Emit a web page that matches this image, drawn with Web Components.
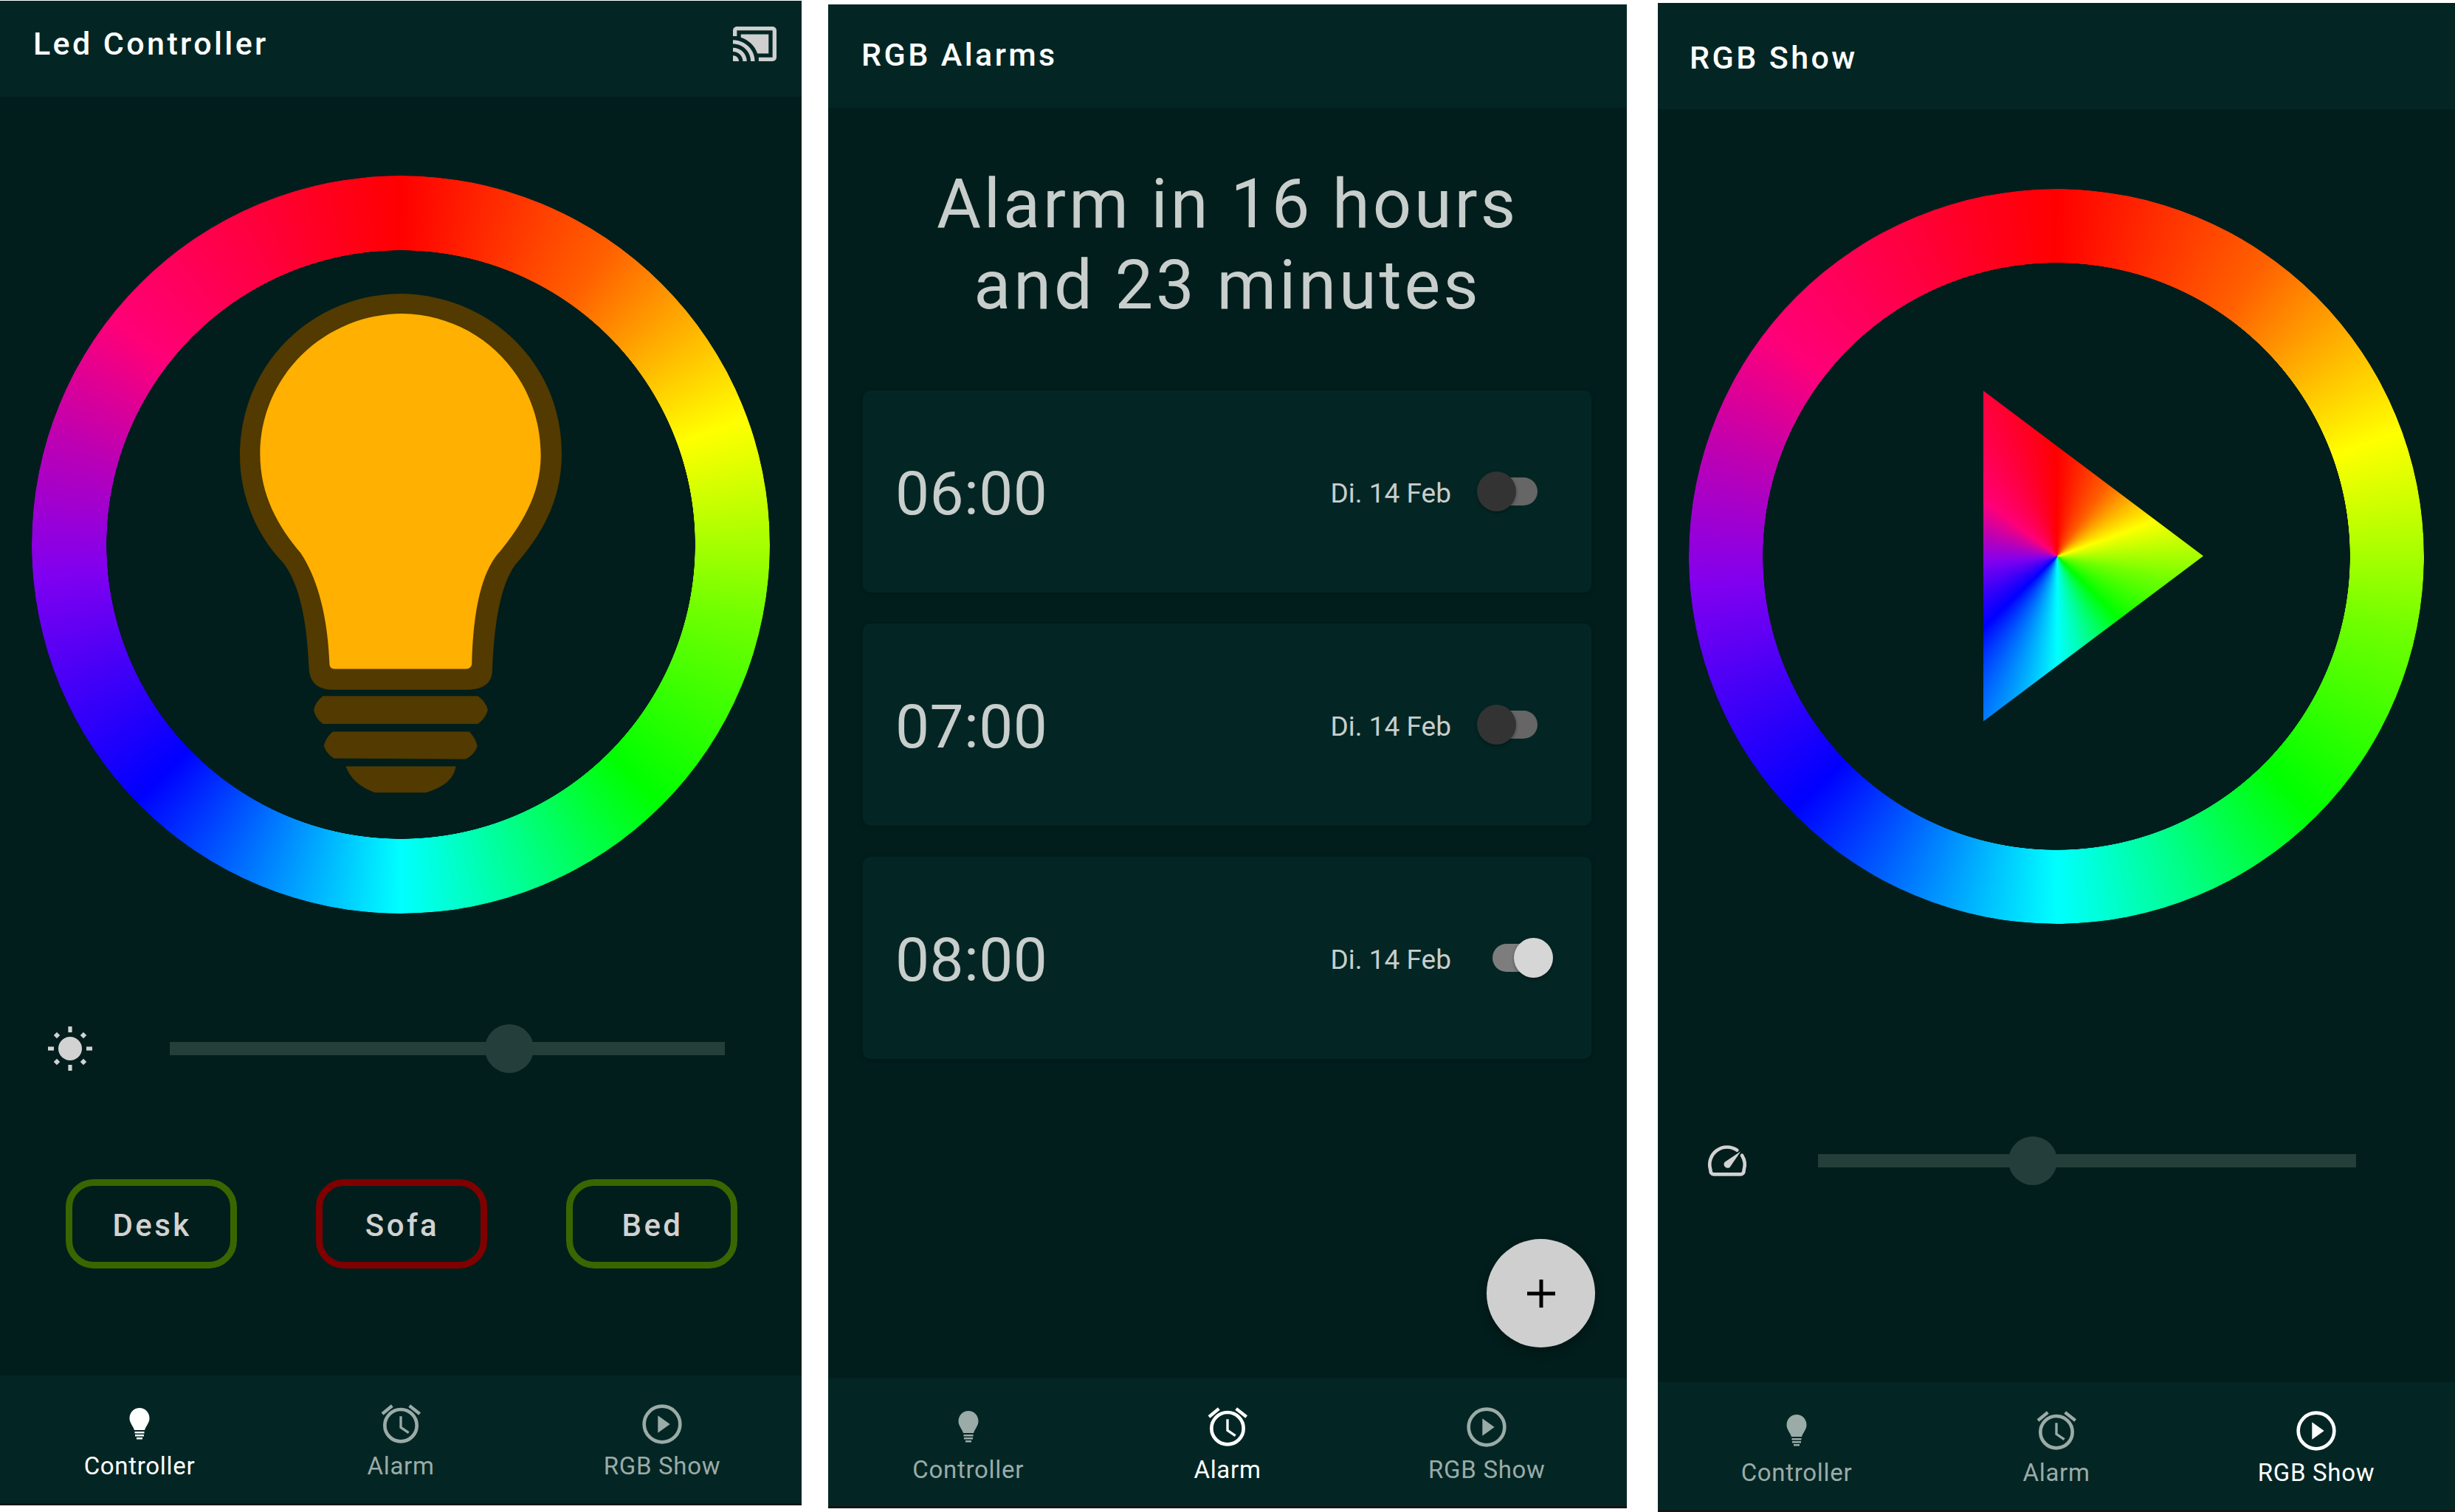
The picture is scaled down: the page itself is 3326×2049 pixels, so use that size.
<!DOCTYPE html>
<html>
<head>
<meta charset="utf-8">
<title>Led Controller</title>
<style>
    html, body { margin: 0; padding: 0; background: #fff; }
    body { display: flex; align-items: flex-start; width: 3326px; height: 2049px; overflow: hidden; font-family: Roboto, "Liberation Sans", sans-serif; }
</style>
</head>
<body>

<led-phone heading="Led Controller" style="--w:1086px;--h:2039px;--top:1px;--left:0px;--bar:130px;--bar-pad:14px;">
    <svg slot="action" width="59" height="47" viewBox="1 3 22 18" preserveAspectRatio="none" fill="#cfcfcf"><path d="M1 18v3h3c0-1.66-1.34-3-3-3zm0-4v2c2.76 0 5 2.24 5 5h2c0-3.87-3.13-7-7-7zm18-7H5v1.63c3.96 1.28 7.09 4.41 8.37 8.37H19V7zM1 10v2c4.97 0 9 4.03 9 9h2c0-6.08-4.93-11-11-11zm20-7H3c-1.1 0-2 .9-2 2v3h2V5h18v14h-7v2h7c1.1 0 2-.9 2-2V5c0-1.1-.9-2-2-2z"/></svg>
    <led-wheel style="--size:1000px;--hole:399px;margin:107px 0 0 43px;">
        <led-bulb></led-bulb>
    </led-wheel>
    <led-slider value="460" style="--track:752px;margin:150px 0 0 0;--icon-left:55px;--gap:95px;">
        <svg width="80" height="66" viewBox="0 0 80 66" fill="#d2d2d2">
            <circle cx="40" cy="33" r="16"/>
            <rect x="37.4" y="3" width="5.2" height="8"/><rect x="37.4" y="55" width="5.2" height="8"/>
            <rect x="10" y="30.4" width="8" height="5.2"/><rect x="62" y="30.4" width="8" height="5.2"/>
            <rect x="19" y="12" width="6" height="6" transform="rotate(45 22 15)"/><rect x="55" y="12" width="6" height="6" transform="rotate(45 58 15)"/>
            <rect x="19" y="48" width="6" height="6" transform="rotate(45 22 51)"/><rect x="55" y="48" width="6" height="6" transform="rotate(45 58 51)"/>
        </svg>
    </led-slider>
    <room-row>
        <room-button color="#3a6600">Desk</room-button>
        <room-button color="#800000">Sofa</room-button>
        <room-button color="#3a6600">Bed</room-button>
    </room-row>
    <nav-bar slot="nav" active="0"></nav-bar>
</led-phone>

<led-phone heading="RGB Alarms" style="--w:1082px;--h:2038px;--top:6px;--left:36px;--bar:140px;--bar-pad:4px;">
    <alarm-title>Alarm in 16 hours<br>and 23 minutes</alarm-title>
    <alarm-card time="06:00" date="Di. 14 Feb"></alarm-card>
    <alarm-card time="07:00" date="Di. 14 Feb"></alarm-card>
    <alarm-card time="08:00" date="Di. 14 Feb" on></alarm-card>
    <fab-add></fab-add>
    <nav-bar slot="nav" active="1" style="--nav-pad:14px;--label-gap:11px;"></nav-bar>
</led-phone>

<led-phone heading="RGB Show" style="--w:1080px;--h:2045px;--top:4px;--left:42px;--bar:144px;--bar-pad:0px;--bar-pad-top:4px;--title-left:43px;">
    <led-wheel style="--size:996px;--hole:398px;margin:108px 0 0 42px;">
        <rgb-play></rgb-play>
    </led-wheel>
    <led-slider value="291" style="--track:729px;margin:288px 0 0 0;--icon-left:64px;--gap:92px;">
        <svg width="61" height="66" viewBox="60 29 183 198" fill="none" stroke="#d2d2d2">
            <path d="M190 85 A71 71 0 0 0 82 165 Q82 183 95 183 L205 183 Q218 183 218 165 A71 71 0 0 0 210 106" stroke-width="14" stroke-linecap="round"/>
            <path d="M205 90 L161 154 A15 15 0 0 1 140 133 Z" fill="#d2d2d2" stroke="none"/>
        </svg>
    </led-slider>
    <nav-bar slot="nav" active="2"></nav-bar>
</led-phone>

<script>
(function () {
    // stops are read off the reference wheel, hue spacing there is not even
    const STOPS = '#f00 0deg, #ff6000 35deg, #ff0 70deg, #70ff00 102deg, #0f0 135deg, #00ff80 157deg, #0ff 180deg, #0080ff 203deg, #00f 226deg, #8000f0 265deg, #c000b0 288deg, #ff0077 308deg, #ff0040 334deg, #f00 360deg';

    function shadow(el, html) {
        el.attachShadow({mode: "open"}).innerHTML = html;
    }

    class LedPhone extends HTMLElement {
        constructor() {
            super();
            shadow(this, `
                <style>
                    :host {
                        display: flex;
                        flex-direction: column;
                        flex: none;
                        box-sizing: border-box;
                        width: var(--w);
                        height: var(--h);
                        margin-top: var(--top);
                        margin-left: var(--left);
                        background: #011e1c;
                        border-bottom: 3px solid #141414;
                        font-family: Roboto, "Liberation Sans", sans-serif;
                    }
                    header {
                        flex: none;
                        display: flex;
                        align-items: center;
                        justify-content: space-between;
                        box-sizing: border-box;
                        height: var(--bar);
                        padding: var(--bar-pad-top, 0px) 34px var(--bar-pad) var(--title-left, 45px);
                        background: #032624;
                    }
                    h1 {
                        margin: 0;
                        font-size: 43px;
                        font-weight: 500;
                        letter-spacing: 3.4px;
                        color: #fff;
                    }
                    main {
                        flex: 1;
                        position: relative;
                        display: flex;
                        flex-direction: column;
                        align-items: flex-start;
                    }
                </style>
                <header><h1></h1><slot name="action"></slot></header>
                <main><slot></slot></main>
                <slot name="nav"></slot>
            `);
            this.shadowRoot.querySelector('h1').textContent = this.getAttribute('heading');
        }
    }

    class LedWheel extends HTMLElement {
        constructor() {
            super();
            shadow(this, `
                <style>
                    :host {
                        display: flex;
                        position: relative;
                        align-items: center;
                        justify-content: center;
                        flex: none;
                        width: var(--size);
                        height: var(--size);
                    }
                    .ring {
                        position: absolute;
                        inset: 0;
                        border-radius: 50%;
                        background: conic-gradient(from 0deg, ${STOPS});
                        -webkit-mask: radial-gradient(circle closest-side, transparent calc(var(--hole) - .5px), #000 var(--hole));
                        mask: radial-gradient(circle closest-side, transparent calc(var(--hole) - .5px), #000 var(--hole));
                    }
                    slot { position: relative; }
                </style>
                <div class="ring"></div>
                <slot></slot>
            `);
        }
    }

    class LedBulb extends HTMLElement {
        constructor() {
            super();
            shadow(this, `
                <style>
                    :host { display: block; position: relative; width: 436px; height: 676px; margin-top: -4px; }
                    svg { display: block; }
                </style>
                <svg width="436" height="676" viewBox="133 80 1307 1433" preserveAspectRatio="none">
                    <g fill="#523a00">
                        <path d="M790 80 C1150 85 1440 280 1440 540 C1440 680 1350 780 1250 860 C1190 920 1165 1030 1158 1165 C1155 1205 1110 1218 1050 1218 L520 1218 C450 1218 415 1200 413 1150 C405 1020 375 910 305 850 C210 780 133 670 133 545 C133 280 430 80 790 80 Z"/>
                        <path d="M470 1236 L1100 1236 Q1135 1255 1140 1276 Q1130 1300 1100 1316 L470 1316 Q440 1300 433 1276 Q440 1252 470 1236 Z"/>
                        <path d="M510 1338 L1065 1338 Q1092 1358 1097 1380 Q1085 1405 1050 1417 L515 1415 Q482 1400 474 1378 Q482 1355 510 1338 Z"/>
                        <path d="M563 1438 L1010 1438 Q1000 1490 890 1513 L680 1513 Q590 1490 563 1438 Z"/>
                    </g>
                    <path fill="#ffb000" d="M790 137 C1110 140 1355 320 1355 545 C1355 660 1270 750 1190 820 C1110 880 1080 1000 1075 1145 Q1070 1158 1050 1158 L520 1158 Q498 1158 497 1145 C490 1010 450 900 380 825 C290 750 215 660 215 540 C215 320 470 140 790 137 Z"/>
                </svg>
            `);
        }
    }

    class RgbPlay extends HTMLElement {
        constructor() {
            super();
            shadow(this, `
                <style>
                    :host {
                        display: block;
                        position: relative;
                        width: 298px;
                        height: 448px;
                        margin: -1px 0 0 100px;
                        background: conic-gradient(at 100px 224px, ${STOPS});
                        clip-path: polygon(0 0, 100% 50%, 0 100%);
                    }
                </style>
            `);
        }
    }

    class LedSlider extends HTMLElement {
        constructor() {
            super();
            shadow(this, `
                <style>
                    :host {
                        display: flex;
                        align-items: center;
                        flex: none;
                        height: 66px;
                    }
                    .icon { display: flex; margin-left: var(--icon-left); margin-right: var(--gap); }
                    .track {
                        position: relative;
                        width: var(--track);
                        height: 18px;
                        background: #243e3a;
                    }
                    .thumb {
                        position: absolute;
                        top: -24px;
                        width: 66px;
                        height: 66px;
                        margin-left: -33px;
                        border-radius: 50%;
                        background: #243f3b;
                    }
                </style>
                <span class="icon"><slot></slot></span>
                <div class="track"><div class="thumb"></div></div>
            `);
            this.shadowRoot.querySelector('.thumb').style.left = this.getAttribute('value') + 'px';
        }
    }

    class RoomRow extends HTMLElement {
        constructor() {
            super();
            shadow(this, `
                <style>
                    :host { display: flex; gap: 107px; margin: 144px 0 0 89px; }
                </style>
                <slot></slot>
            `);
        }
    }

    class RoomButton extends HTMLElement {
        constructor() {
            super();
            shadow(this, `
                <style>
                    :host {
                        display: flex;
                        align-items: center;
                        justify-content: center;
                        box-sizing: border-box;
                        width: 232px;
                        height: 121px;
                        padding: 3px 0 0 2px;
                        border: 9px solid ${this.getAttribute('color')};
                        border-radius: 38px;
                        font-size: 42px;
                        font-weight: 500;
                        letter-spacing: 3.4px;
                        color: #d2d2d2;
                    }
                </style>
                <slot></slot>
            `);
        }
    }

    class AlarmTitle extends HTMLElement {
        constructor() {
            super();
            shadow(this, `
                <style>
                    :host {
                        display: block;
                        align-self: stretch;
                        margin: 76px 0 87px;
                        text-align: center;
                        font-size: 92px;
                        line-height: 110px;
                        letter-spacing: 3.9px;
                        color: #c8cecc;
                    }
                </style>
                <slot></slot>
            `);
        }
    }

    class AlarmCard extends HTMLElement {
        constructor() {
            super();
            shadow(this, `
                <style>
                    :host {
                        display: flex;
                        align-items: center;
                        flex: none;
                        box-sizing: border-box;
                        width: 987px;
                        height: 274px;
                        margin: 0 0 42px 47px;
                        padding: 6px 52px 0 44px;
                        border-radius: 10px;
                        background: #032624;
                        box-shadow: 0 2px 6px rgba(0, 0, 0, 0.2);
                        color: #c8cecc;
                    }
                    .time { font-size: 82px; letter-spacing: 0.4px; flex: 1; }
                    .date { font-size: 37px; margin-right: 35px; margin-top: -2px; }
                </style>
                <span class="time"></span>
                <span class="date"></span>
                <led-switch></led-switch>
            `);
            this.shadowRoot.querySelector('.time').textContent = this.getAttribute('time');
            this.shadowRoot.querySelector('.date').textContent = this.getAttribute('date');
            if (this.hasAttribute('on')) {
                this.shadowRoot.querySelector('led-switch').setAttribute('on', '');
            }
        }
    }

    class LedSwitch extends HTMLElement {
        constructor() {
            super();
            shadow(this, `
                <style>
                    :host {
                        display: block;
                        position: relative;
                        flex: none;
                        width: 103px;
                        height: 54px;
                        margin-top: -6px;
                    }
                    .track {
                        position: absolute;
                        left: 21px;
                        top: 8px;
                        width: 61px;
                        height: 38px;
                        border-radius: 19px;
                        background: #666;
                    }
                    .thumb {
                        position: absolute;
                        left: 0;
                        top: 0;
                        width: 53px;
                        height: 54px;
                        border-radius: 50%;
                        background: #333;
                        box-shadow: 0 2px 4px rgba(0, 0, 0, 0.35);
                    }
                    :host([on]) .track { background: #7d7d7d; }
                    :host([on]) .thumb { left: 50px; background: #d6d6d6; }
                </style>
                <div class="track"></div>
                <div class="thumb"></div>
            `);
        }
    }

    class FabAdd extends HTMLElement {
        constructor() {
            super();
            shadow(this, `
                <style>
                    :host {
                        position: absolute;
                        right: 43px;
                        bottom: 42px;
                        display: flex;
                        align-items: center;
                        justify-content: center;
                        width: 147px;
                        height: 147px;
                        border-radius: 50%;
                        background: #cfcfcf;
                        box-shadow: 0 6px 14px rgba(0, 0, 0, 0.3);
                    }
                </style>
                <svg width="38" height="38" viewBox="0 0 38 38"><path d="M16.500 0h5v16.500h16.500v5h-16.500v16.500h-5v-16.500h-16.500v-5h16.500z" fill="#000"/></svg>
            `);
        }
    }

    const NAV_ICONS = [
        `<svg width="60" height="56" viewBox="0 0 60 56" fill="currentColor">
            <path d="M30 7 C22.500 7 16.500 13 16.500 21 C16.500 27 21 31 23 37 L37 37 C39 31 43.500 27 43.500 21 C43.500 13 37.500 7 30 7 Z"/>
            <rect x="23.500" y="39" width="13" height="2.500"/><rect x="24" y="43" width="12" height="2.500"/><rect x="26" y="47" width="8" height="2.500"/>
        </svg>`,
        `<svg width="60" height="56" viewBox="100 30 180 168" fill="none" stroke="currentColor" stroke-width="14">
            <circle cx="190" cy="122" r="65"/>
            <path d="M115 75 L155 42 M225 42 L267 75" stroke-width="13"/>
            <path d="M190 85 L190 130 L222 152" stroke-width="10"/>
        </svg>`,
        `<svg width="60" height="56" viewBox="1160 30 180 168">
            <circle cx="1250" cy="117" r="73" fill="none" stroke="currentColor" stroke-width="14"/>
            <path d="M1233 82 L1233 152 L1282 117 Z" fill="currentColor"/>
        </svg>`
    ];
    const NAV_LABELS = ['Controller', 'Alarm', 'RGB Show'];

    class NavBar extends HTMLElement {
        constructor() {
            super();
            const active = Number(this.getAttribute('active'));
            const items = NAV_LABELS.map((label, i) => `
                <div class="item${i === active ? ' active' : ''}">
                    ${NAV_ICONS[i]}
                    <span>${label}</span>
                </div>`).join('');
            shadow(this, `
                <style>
                    :host {
                        display: flex;
                        flex: none;
                        box-sizing: border-box;
                        height: 173px;
                        padding: 37px var(--nav-pad, 12px) 0;
                        background: #032624;
                    }
                    .item {
                        flex: 1;
                        display: flex;
                        flex-direction: column;
                        align-items: center;
                        color: #9baba8;
                    }
                    .item.active { color: #fff; }
                    svg { display: block; }
                    span {
                        margin-top: var(--label-gap, 10px);
                        font-size: 33px;
                        line-height: 40px;
                        letter-spacing: 0.7px;
                    }
                </style>
                ${items}
            `);
        }
    }

    customElements.define('led-phone', LedPhone);
    customElements.define('led-wheel', LedWheel);
    customElements.define('led-bulb', LedBulb);
    customElements.define('rgb-play', RgbPlay);
    customElements.define('led-slider', LedSlider);
    customElements.define('room-row', RoomRow);
    customElements.define('room-button', RoomButton);
    customElements.define('alarm-title', AlarmTitle);
    customElements.define('led-switch', LedSwitch);
    customElements.define('alarm-card', AlarmCard);
    customElements.define('fab-add', FabAdd);
    customElements.define('nav-bar', NavBar);
})();
</script>
</body>
</html>
